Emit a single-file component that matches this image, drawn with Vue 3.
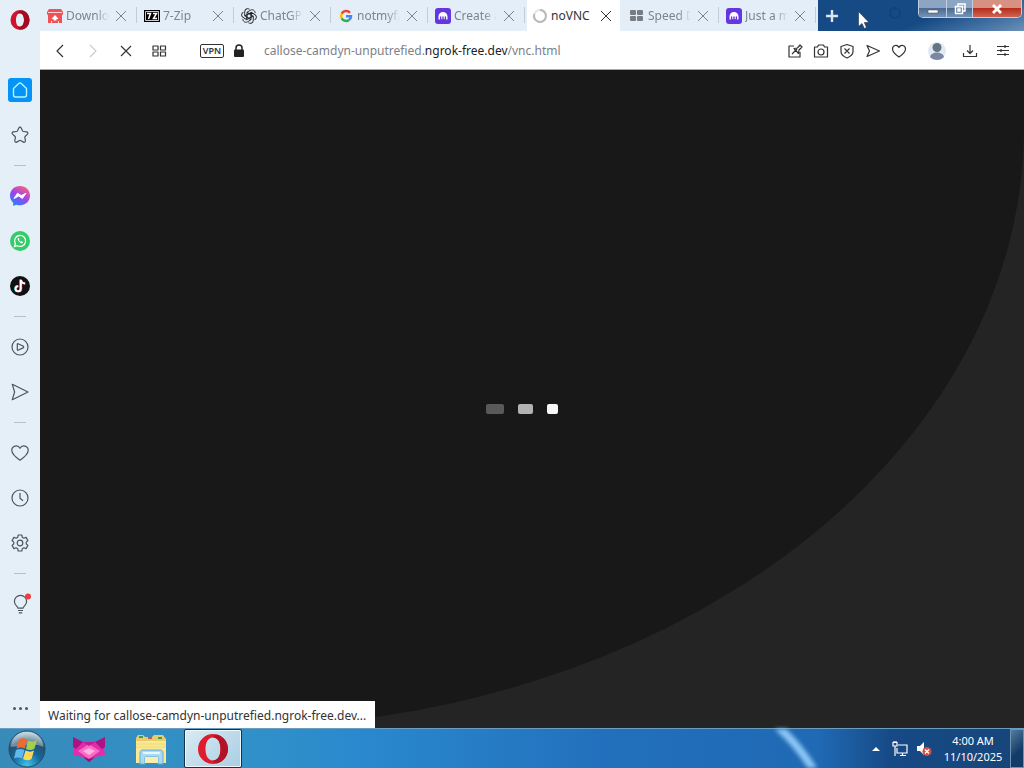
<template>
  <div class="desktop">
    <div class="browser">
      <aside class="sidebar">
        <button class="opera-menu" aria-label="Opera menu">
          <svg width="20" height="20" viewBox="0 0 20 20">
            <path fill="#d3122f" fill-rule="evenodd" d="M10 0a9.500 10 0 1 0 0 20a9.500 10 0 1 0 0-20zM10 3.200c2.500 0 4 2.800 4 6.800s-1.500 6.800-4 6.800s-4-2.800-4-6.800s1.500-6.800 4-6.800z" />
            <path fill="#a30b24" d="M12.500.5C17 1.500 19.500 5.500 19.500 10s-2.500 8.500-7 9.500c-2 .3-4-.6-5.200-3.200C12 18 14 14 14 10s-2-8-6.700-6.300C8.500 1.100 10.500.2 12.500.5z" />
          </svg>
        </button>
        <nav class="side-nav">
          <template v-for="(item, i) in sideItems" :key="i">
            <hr v-if="item === '-'" class="side-line">
            <button v-else class="side-item" :aria-label="item">
              <svg v-if="item === 'home'" width="24" height="24" viewBox="0 0 24 24">
                <rect width="24" height="24" rx="3" fill="#0494f7" />
                <path d="M5.500 10.500L10.700 5.500a2 2 0 0 1 2.600 0l5.200 5v6.500a2 2 0 0 1-2 2h-9a2 2 0 0 1-2-2z" fill="none" stroke="#b8f2ff" stroke-width="1.400" stroke-linejoin="round" />
              </svg>
              <svg v-else-if="item === 'messenger'" width="20" height="20" viewBox="0 0 20 20">
                <defs>
                  <linearGradient id="msn" x1="0.2" y1="1" x2="0.8" y2="0">
                    <stop offset="0" stop-color="#1688ff" />
                    <stop offset="0.5" stop-color="#a044ee" />
                    <stop offset="1" stop-color="#ff6470" />
                  </linearGradient>
                </defs>
                <path d="M10 0C4.300 0 0 4.100 0 9.600c0 3 1.200 5.500 3.200 7.200V20l3-1.300c1.200.4 2.500.6 3.800.6c5.700 0 10-4.100 10-9.700S15.700 0 10 0z" fill="url(#msn)" />
                <path d="M4 12.500l3.500-5.300l3.700 2.400L16 7.200l-3.600 5.200L8.700 10z" fill="#fff" stroke="#fff" stroke-linejoin="round" />
              </svg>
              <svg v-else-if="item === 'whatsapp'" width="20" height="20" viewBox="0 0 20 20">
                <circle cx="10" cy="10" r="10" fill="#31cd66" />
                <path d="M4.500 15.500l.8-2.900a5.500 5.500 0 1 1 2.100 2.100z" fill="none" stroke="#fff" stroke-width="1.300" />
                <path d="M7.800 7.200c-.9 1.600 2.500 5.700 4.800 5l.5-1.200l-1.700-.9l-.7.700c-.8-.3-1.400-1-1.700-1.700l.5-.7l-.6-1.400z" fill="#fff" />
              </svg>
              <svg v-else-if="item === 'tiktok'" width="20" height="20" viewBox="0 0 20 20">
                <circle cx="10" cy="10" r="10" fill="#111" />
                <g fill="none" stroke-width="1.900">
                  <path d="M10.300 3.500v9a2.600 2.600 0 1 1-2.600-2.600M10.300 3.700c.4 2.300 2 3.500 4.200 3.600" stroke="#25e5df" />
                  <path d="M11.300 4v9a2.600 2.600 0 1 1-2.600-2.600M11.300 4.200c.4 2.300 2 3.500 4.200 3.600" stroke="#f32b58" />
                  <path d="M10.800 3.700v9a2.600 2.600 0 1 1-2.600-2.600M10.800 3.900c.4 2.300 2 3.500 4.200 3.600" stroke="#fff" />
                </g>
              </svg>
              <svg v-else class="line-icon" width="20" height="20" viewBox="0 0 20 20">
                <path v-if="item === 'pinboards'" d="M8.800 3a1.300 1.300 0 0 1 2.400 0l1.400 3a1 1 0 0 0 .8.500l3.300.4a1.300 1.300 0 0 1 .8 2.200l-2.400 2.400a1 1 0 0 0-.3.900l.6 3.300a1.300 1.300 0 0 1-1.900 1.400l-2.900-1.600a1 1 0 0 0-1 0l-2.900 1.600a1.300 1.300 0 0 1-1.900-1.400l.6-3.300a1 1 0 0 0-.3-.9L2.500 9.100a1.300 1.300 0 0 1 .8-2.200l3.300-.4a1 1 0 0 0 .8-.5z" />
                <g v-else-if="item === 'player'">
                  <circle cx="10" cy="10" r="8" />
                  <path d="M7.300 7.200c0-.4.300-.6.700-.5l5 2.300c.9.400.9 1.500 0 1.900l-5 2.300c-.4.100-.7-.1-.7-.5z" />
                </g>
                <path v-else-if="item === 'flow'" d="M2.300 2.300L18 10L2.300 17.700L4.600 10z" />
                <path v-else-if="item === 'bookmarks'" d="M10 17.200C4.500 13.500 1.800 10.700 1.800 7.300c0-4.300 5.800-6.300 8.200-2c2.400-4.300 8.200-2.300 8.200 2c0 3.400-2.700 6.200-8.200 9.900z" />
                <g v-else-if="item === 'history'">
                  <circle cx="10" cy="10" r="8" />
                  <path d="M10 5v5.200l3 2.600" />
                </g>
                <g v-else-if="item === 'settings'">
                  <path d="M8.200 2h3.600l.5 2.300l1.500.9l2.300-.8l1.800 3.100l-1.700 1.600v1.800l1.700 1.600l-1.800 3.100l-2.300-.8l-1.500.9l-.5 2.300H8.200l-.5-2.300l-1.500-.9l-2.300.8l-1.800-3.100l1.700-1.600V9.100L2.100 7.500l1.800-3.100l2.300.8l1.500-.9z" />
                  <circle cx="10" cy="10" r="2.800" />
                </g>
                <g v-else-if="item === 'tips'">
                  <path d="M8 14.200c0-1.800-3.600-3-3.600-6.800a6.100 6.100 0 0 1 12.200 0c0 3.800-3.600 5-3.600 6.800zM8 16.500h5M8.800 18.900h3.400" />
                  <circle cx="18" cy="2.500" r="3" class="dot" />
                </g>
              </svg>
            </button>
          </template>
        </nav>
        <button class="more" aria-label="Sidebar setup"><i></i><i></i><i></i></button>
      </aside>

      <div class="main">
        <header class="tab-strip">
          <div class="tabs" role="tablist">
            <div v-for="tab in tabs" :key="tab.title" class="tab" :class="{ active: tab.active }" role="tab">
              <svg v-if="tab.icon === 'itch'" width="16" height="16" viewBox="0 0 16 16">
                <path d="M2 1h12l2 3v2l-1 1.500V15H1V7.500L0 6V4z" fill="#ef5158" />
                <path d="M1 4.500h14M4.500 15v-2M11.500 15v-2" stroke="#fbd5d6" fill="none" />
                <path d="M8 7l3.500 4H9.500v1.500h-3V11h-2z" fill="#fff" />
              </svg>
              <svg v-else-if="tab.icon === '7z'" width="16" height="16" viewBox="0 0 16 16">
                <rect y="2" width="16" height="12" fill="#000" />
                <path d="M1.500 3.500h13v9h-13z" fill="none" stroke="#fff" stroke-width=".8" />
                <path d="M3 5.500h3.500L4.500 11M9 5.500h3.500L9.500 10.500H13" fill="none" stroke="#fff" stroke-width="1.500" />
              </svg>
              <svg v-else-if="tab.icon === 'gpt'" width="16" height="16" viewBox="0 0 16 16" fill="none" stroke="#222" stroke-width=".9">
                <path v-for="n in 6" :key="n" :transform="`rotate(${n * 60} 8 8)`" d="M6 9.200V4.200l3.700-2.100c2-1.100 4.600.4 4.400 3M6 4.200l4.300 2.500" />
              </svg>
              <svg v-else-if="tab.icon === 'google'" width="16" height="16" viewBox="-1 0 16 16" fill="none" stroke-width="2.500">
                <path d="M11 4.700A5 5 0 0 0 2.700 5.600" stroke="#ea4335" />
                <path d="M2.700 5.600a5 5 0 0 0 0 4.800" stroke="#fbbc05" />
                <path d="M2.700 10.400a5 5 0 0 0 7.300 1.500" stroke="#34a853" />
                <path d="M10 11.900c1.400-1 2-2.300 2-3.700H7" stroke="#4285f4" />
              </svg>
              <svg v-else-if="tab.icon === 'kraken'" width="16" height="16" viewBox="0 0 16 16">
                <rect width="16" height="16" rx="3" fill="#6536e0" />
                <path d="M3.500 11V8.500a4.500 4.500 0 0 1 9 0V11a.7.700 0 0 1-1.400 0V9a.7.700 0 0 0-1.400 0v2a.7.700 0 0 1-1 0V9a.7.700 0 0 0-1.400 0v2a.7.700 0 0 1-1 0V9a.7.700 0 0 0-1.400 0v2a.7.700 0 0 1-1.400 0z" fill="#fff" />
              </svg>
              <svg v-else-if="tab.icon === 'loading'" width="16" height="16" viewBox="0 0 16 16" fill="none" stroke-width="2">
                <circle cx="8" cy="8" r="6" stroke="#e4e4e4" />
                <path d="M8 2a6 6 0 1 1-5.700 4" stroke="#b9b9b9" />
              </svg>
              <svg v-else width="16" height="16" viewBox="0 0 16 16" fill="#777d83">
                <rect v-for="n in 4" :key="n" :x="n % 2 ? 1 : 8" :y="n > 2 ? 8 : 2" width="6" height="5" rx="1" />
              </svg>
              <span class="title">{{ tab.title }}</span>
              <button class="close" aria-label="Close tab">
                <svg width="12" height="12" viewBox="0 0 12 12"><path d="M1 1l10 10M11 1L1 11" stroke="currentColor" /></svg>
              </button>
            </div>
          </div>
          <button class="new-tab" aria-label="New tab">
            <svg width="12" height="12" viewBox="0 0 12 12"><path d="M6 0v12M0 6h12" stroke="#dbe6f0" stroke-width="2.400" /></svg>
          </button>
          <svg class="ring" width="14" height="26" viewBox="0 0 14 26"><circle cx="7" cy="13" r="5" fill="none" stroke="#123a66" stroke-width="2" opacity=".5" /></svg>
          <div class="window-buttons">
            <button aria-label="Minimize"><svg width="12" height="12" viewBox="0 0 12 12"><path d="M1 7h10v3H1z" fill="#fff" stroke="#46566a" stroke-width=".6" /></svg></button>
            <button aria-label="Restore"><svg width="12" height="12" viewBox="0 0 12 12" fill="none" stroke="#fff" stroke-width="1.500"><path d="M4 3V1h7v7H9M1.500 3.500h7v7h-7zM4 6h2v2H4z" /></svg></button>
            <button class="quit" aria-label="Close"><svg width="12" height="12" viewBox="0 0 12 12"><path d="M2 2l8 8M10 2l-8 8" stroke="#fff" stroke-width="2.800" /></svg></button>
          </div>
        </header>

        <div class="toolbar">
          <button v-for="(icon, i) in navIcons" :key="i" class="nav-btn" :class="{ disabled: i === 1 }" :aria-label="icon.name">
            <svg class="line-icon" width="16" height="16" viewBox="0 0 16 16"><path :d="icon.d" /></svg>
          </button>
          <button class="vpn">VPN</button>
          <svg width="12" height="14" viewBox="0 0 12 14">
            <path d="M3 6V4a3 3 0 0 1 6 0v2" fill="none" stroke="#222" stroke-width="1.500" />
            <rect x="1" y="5.500" width="10" height="7.500" rx="1" fill="#222" />
          </svg>
          <a class="url" href="#">callose-camdyn-unputrefied.<b>ngrok-free.dev</b>/vnc.html</a>
          <div class="actions">
            <button v-for="icon in actionIcons" :key="icon.name" :aria-label="icon.name">
              <svg class="line-icon" width="16" height="16" viewBox="0 0 16 16"><path :d="icon.d" /></svg>
            </button>
          </div>
          <button class="tool" aria-label="Profile">
            <svg width="18" height="20" viewBox="0 0 18 20">
              <circle cx="9" cy="10" r="9" fill="#deebf4" />
              <circle cx="9" cy="6.500" r="4.500" fill="#66757f" />
              <path d="M2 16c1-6 13-6 14 0c-3 4-11 4-14 0z" fill="#7a88a4" />
            </svg>
          </button>
          <button class="tool" aria-label="Downloads">
            <svg class="line-icon" width="16" height="16" viewBox="0 0 16 16"><path d="M8 2v8M5 7.500L8 10.500L11 7.500M1.500 10v3.500h13V10" /></svg>
          </button>
          <button class="tool" aria-label="Easy setup">
            <svg class="line-icon" width="16" height="16" viewBox="0 0 16 16"><path d="M2 3.500h12M2 7.500h12M2 11.500h12M10 2v3M6 6v3M10 10v3" /></svg>
          </button>
        </div>

        <main class="page">
          <div class="backdrop">
            <div class="loader"><i></i><i></i><i></i></div>
          </div>
          <div class="status">Waiting for callose-camdyn-unputrefied.ngrok-free.dev...</div>
        </main>
      </div>
    </div>

    <footer class="taskbar">
      <svg class="streak" width="70" height="39" viewBox="0 0 70 39"><path d="M13-4C28 9 42 26 53 45" fill="none" stroke="#8cc7f5" stroke-width="8" /></svg>
      <button class="start" aria-label="Start">
        <svg width="38" height="38" viewBox="0 0 38 38">
          <defs>
            <radialGradient id="orb" cx="0.5" cy="0.95" r="0.9">
              <stop offset="0" stop-color="#38c6ee" />
              <stop offset="0.45" stop-color="#17669a" />
              <stop offset="0.75" stop-color="#254f70" />
              <stop offset="1" stop-color="#a6c3d2" />
            </radialGradient>
          </defs>
          <circle cx="19" cy="19" r="18" fill="url(#orb)" stroke="#264b65" />
          <path d="M3 17a16 15 0 0 1 32 0c-9-5-20-1-32 0z" fill="#fff" opacity=".35" />
          <path d="M11 9.500c3-2 5.500-1.500 8 0l-2 9c-3-1.500-5.500-1.500-8.500 0z" fill="#ef6a2c" />
          <path d="M20 10.500c3.500 1.500 6 1.500 9-.5l-2.500 8.500c-3 2-5.500 2-8.500.5z" fill="#a4cf4c" />
          <path d="M8 20c3-1.500 5.500-1.500 8.500 0l-2.500 8.500c-2.500-1.500-5.500-1.500-8 0z" fill="#61b8ee" />
          <path d="M17.500 20.500c3.500 1.500 6 1.500 8.500 0l-2.500 8.500c-3 2-5.500 1.500-8.500 0z" fill="#ffd75a" />
        </svg>
      </button>
      <button class="task" aria-label="Fox">
        <svg width="34" height="28" viewBox="0 0 34 28">
          <path d="M1 2l10 5h12l10-5l-1 11l1 7l-10 2l-6 5l-6-5L1 20l1-7z" fill="#e22cae" />
          <path d="M1 2l10 5l-7 7l-3-2zM33 2L23 7l7 7l3-2z" fill="#a81583" />
          <path d="M17 9l11 7l-11 8L6 16z" fill="#fb6cc5" />
          <path d="M17 13l6 3l-6 4l-6-4z" fill="#ffb3e0" />
          <path d="M11 7h12l-6 4z" fill="#c41c97" />
          <path d="M11 22l6 2l6-2l-6 5z" fill="#8e126f" />
        </svg>
      </button>
      <button class="task" aria-label="Windows Explorer">
        <svg width="34" height="32" viewBox="0 0 34 32">
          <path d="M2 5l2-3h5l2 2h7l2-2h9l3 4v24H2z" fill="#e9cc68" />
          <path d="M5 3h4v2H5zM24 4h4v2h-4z" fill="#3e9a61" />
          <path d="M14 4h4v2h-4z" fill="#cb593f" />
          <path d="M2 8h30v22H2z" fill="#fae995" />
          <path d="M2 11h30M2 14h30" stroke="#efd875" />
          <path d="M6 31V20c0-2 1-3 3-3h17c2 0 3 1 3 3v11h-5v-7H11v7z" fill="#a9daf2" stroke="#65a9cf" />
          <path d="M11 24h13v6H11z" fill="#f8eeb0" />
          <path d="M9 20h17" stroke="#e6f6fd" stroke-width="2" />
        </svg>
      </button>
      <button class="task running" aria-label="Opera">
        <svg width="32" height="32" viewBox="0 0 32 32">
          <path fill="#df1c2b" fill-rule="evenodd" d="M16 1a15 15 0 1 0 0 30a15 15 0 1 0 0-30zM16 4.500c5 0 7.500 5 7.500 11.500S21 27.500 16 27.500S8.500 22.500 8.500 16S11 4.500 16 4.500z" />
          <path fill="#b41225" d="M20 1.800C27 3 31 10 31 16s-4 13-11 14.200c-2 0-3-1-4-2.700c5 0 7.500-5 7.500-11.500S21 4.500 16 4.500c1-1.700 2-2.700 4-2.700z" />
        </svg>
      </button>
      <div class="tray">
        <button aria-label="Show hidden icons"><svg width="10" height="6" viewBox="0 0 10 6"><path d="M5 1l4 4H1z" fill="#fff" /></svg></button>
        <button aria-label="Network">
          <svg width="16" height="16" viewBox="0 0 16 16" fill="none" stroke="#fff" stroke-width="1.200">
            <path d="M6 4h9v8H5V7M8 14.500h6M10.500 12v2.500M1 1.500h4v3.500H1zM3 5v10M2 0v2M4 0v2" />
          </svg>
        </button>
        <button aria-label="Volume muted">
          <svg width="16" height="16" viewBox="0 0 16 16">
            <path d="M1 5h3l4-4v13l-4-4H1z" fill="#fff" />
            <circle cx="11" cy="10.500" r="4.500" fill="#d84b40" />
            <path d="M9 8.500l4 4M13 8.500l-4 4" stroke="#fff" stroke-width="1.500" />
          </svg>
        </button>
      </div>
      <div class="clock"><span>4:00 AM</span><span>11/10/2025</span></div>
      <button class="show-desktop" aria-label="Show desktop"></button>
    </footer>

    <svg class="cursor" width="12" height="18" viewBox="0 0 12 18">
      <path d="M.5.500v15l3.500-3l2.300 5l2.200-1l-2.200-5h4.700z" fill="#fff" stroke="#20334a" stroke-width=".6" />
    </svg>
  </div>
</template>

<script setup>
const tabs = [
  { title: 'Downloa', icon: 'itch' },
  { title: '7-Zip', icon: '7z' },
  { title: 'ChatGPT', icon: 'gpt' },
  { title: 'notmyfa', icon: 'google' },
  { title: 'Create a', icon: 'kraken' },
  { title: 'noVNC', icon: 'loading', active: true },
  { title: 'Speed D', icon: 'dial' },
  { title: 'Just a m', icon: 'kraken' }
]

// '-' is a separator
const sideItems = [
  'home', 'pinboards', '-',
  'messenger', 'whatsapp', 'tiktok', '-',
  'player', 'flow', '-',
  'bookmarks', 'history', 'settings', '-',
  'tips'
]

const navIcons = [
  { name: 'Back', d: 'M11 2L5 8L11 14' },
  { name: 'Forward', d: 'M5 2L11 8L5 14' },
  { name: 'Stop', d: 'M3 3L13 13M13 3L3 13' },
  { name: 'Speed Dial', d: 'M2 3h5v4H2zM9.500 3h5v4h-5zM2 9h5v4H2zM9.500 9h5v4h-5z' }
]

const actionIcons = [
  { name: 'Edit page', d: 'M7 3H2v11h11V9M5 11l5-5M7 5.500l3.500-.5L13 2l2 2l-3 3l-.5 3.500z' },
  { name: 'Snapshot', d: 'M1.500 4h3l1-2h5l1 2h3v10h-13zM11 9a3 3 0 1 1-6 0a3 3 0 0 1 6 0z' },
  { name: 'Ad blocker', d: 'M8 1.500l6 2v5c0 3-2.500 5-6 6.500c-3.500-1.500-6-3.500-6-6.500v-5zM5.500 5.500l5 5M10.500 5.500l-5 5' },
  { name: 'Send to Flow', d: 'M2 2.500L14.500 8L2 13.500L4.500 8z' },
  { name: 'Bookmark', d: 'M8 14C3.500 11 1.500 8.500 1.500 6c0-3.800 4.700-5 6.500-1.500C9.800 1 14.500 2.200 14.500 6c0 2.500-2 5-6.500 8z' }
]
</script>

<style>
body {
  margin: 0;
}
</style>

<style scoped>
.desktop {
  position: relative;
  display: flex;
  flex-direction: column;
  height: 100vh;
  overflow: hidden;
  font: 12px/16px "Noto Sans", "Open Sans", sans-serif;
  color: #333;
}

button {
  display: flex;
  align-items: center;
  justify-content: center;
  flex: none;
  margin: 0;
  padding: 0;
  border: 0;
  background: none;
  font: inherit;
  color: inherit;
}

svg {
  display: block;
  flex: none;
}

.line-icon {
  fill: none;
  stroke: currentColor;
  stroke-width: 1.2;
  stroke-linejoin: round;
  overflow: visible;
}

.browser {
  display: flex;
  flex: 1;
  min-height: 0;
}

/* sidebar */
.sidebar {
  display: flex;
  flex-direction: column;
  width: 40px;
  background: #e4eff8;
}

.opera-menu {
  height: 40px;
}

.side-nav {
  display: flex;
  flex-direction: column;
  padding-top: 27px;
  color: #4b555e;
}

.side-item {
  height: 45px;
}

.side-line {
  width: 12px;
  height: 1px;
  margin: 8px auto 7px;
  border: 0;
  background: #b8c1c9;
}

.dot {
  fill: #f03b3f;
  stroke: none;
}

.more {
  gap: 3px;
  height: 40px;
  margin-top: auto;
}

.more i {
  width: 3px;
  height: 3px;
  border-radius: 50%;
  background: #4b555e;
}

.main {
  display: flex;
  flex-direction: column;
  flex: 1;
  min-width: 0;
}

/* tabs */
.tab-strip {
  display: flex;
  height: 31px;
  background: linear-gradient(160deg, #164a84 88%, #4a78a8 96%, #6d91b5);
}

.tabs {
  display: flex;
  padding-right: 2px;
  background: #e4eef8;
}

.tab {
  display: flex;
  align-items: center;
  gap: 3px;
  box-sizing: border-box;
  width: 97px;
  padding: 0 10px 0 7px;
  background: linear-gradient(#c3ccd5, #c3ccd5) right 7px / 1px 16px no-repeat;
  color: #7c858d;
}

.tab.active {
  padding: 0 8px 0 5px;
  border: solid #e4eef8;
  border-width: 0 2px;
  background: #fff;
  color: #333;
}

.title {
  flex: 1;
  overflow: hidden;
  white-space: nowrap;
  mask-image: linear-gradient(90deg, #000 70%, transparent);
}

.active .title {
  mask-image: none;
}

.close {
  margin-left: 3px;
}

.new-tab {
  width: 28px;
}

.ring {
  margin-left: auto;
}

.window-buttons {
  display: flex;
  height: 18px;
  margin: 0 2px 0 16px;
  box-sizing: border-box;
  border: 1px solid #c0cfdf;
  border-top: 0;
  border-radius: 0 0 5px 5px;
  overflow: hidden;
}

.window-buttons button {
  width: 27px;
  background: linear-gradient(#8ca5c2 45%, #4b6b92 50%, #7793b2);
}

.window-buttons button + button {
  box-sizing: border-box;
  width: 26px;
  border-left: 1px solid #c0cfdf;
}

.window-buttons .quit.quit {
  width: 49px;
  background: linear-gradient(#d89083 45%, #b52f1c 50%, #cf6450);
}

/* address bar */
.toolbar {
  display: flex;
  align-items: center;
  height: 38px;
  padding: 1px 5px 0 3px;
  box-sizing: border-box;
  min-height: 39px;
  border-bottom: 1px solid #aaa;
  background: #fff;
}

.nav-btn {
  width: 33px;
}

.nav-btn.disabled {
  color: #ccc;
}

.vpn {
  box-sizing: border-box;
  width: 24px;
  height: 14px;
  margin: 0 9px 0 25px;
  border: 1px solid #333;
  border-radius: 2px;
  font-size: 9px;
  line-height: 12px;
  font-weight: 600;
}

.url {
  margin-left: 19px;
  color: #7b8187;
  text-decoration: none;
  white-space: nowrap;
}

.url b {
  font-weight: normal;
  color: #222;
}

.actions {
  display: flex;
  margin-left: auto;
  margin-right: 8px;
}

.actions button {
  width: 26px;
}

.tool {
  width: 33px;
}

/* page */
.page {
  position: relative;
  flex: 1;
  min-height: 0;
  background: #242424;
}

.backdrop {
  display: flex;
  align-items: center;
  justify-content: center;
  height: 100%;
  border-bottom-right-radius: 800px 600px;
  background: #181818;
}

.loader {
  display: flex;
  gap: 14px;
  margin-top: 20px;
  margin-right: 20px;
}

.loader i {
  width: 18px;
  height: 10px;
  border-radius: 2px;
  background: #595959;
}

.loader i:nth-child(2) {
  width: 15px;
  background: #b2b2b2;
}

.loader i:nth-child(3) {
  width: 11px;
  background: #f7f7f7;
}

.status {
  position: absolute;
  left: 0;
  bottom: 0;
  padding: 7px 9px 4px 8px;
  background: #fff;
  white-space: nowrap;
}

/* taskbar */
.taskbar {
  position: relative;
  display: flex;
  align-items: center;
  box-sizing: border-box;
  height: 40px;
  border-top: 1px solid #6b9dc2;
  background: linear-gradient(90deg, #388bb9, #3091c9 25%, #2a89ce 35%, #226fbc 60%, #2069b4 80%, #164a86 87%, #164579);
  color: #fff;
}

.streak {
  position: absolute;
  right: 191px;
  top: 0;
  filter: blur(2px);
}

.start {
  width: 54px;
}

.task {
  width: 62px;
  height: 39px;
}

.start + .task {
  margin-left: 4px;
}

.task.running {
  box-sizing: border-box;
  width: 58px;
  margin-left: 2px;
  border: 1px solid #12354c;
  border-radius: 2px;
  background: linear-gradient(135deg, #d9ebf4, #a9cee3);
  box-shadow: inset 0 0 0 1px #eef8fc;
}

.tray {
  display: flex;
  margin-left: auto;
}

.tray button {
  width: 24px;
}

.clock {
  display: flex;
  flex-direction: column;
  align-items: center;
  width: 74px;
  font-size: 11px;
}

.show-desktop {
  width: 14px;
  height: 39px;
  border: 1px solid #6f93b3;
  background: linear-gradient(135deg, #567b9e, #123c68 60%);
}

.cursor {
  position: absolute;
  left: 858px;
  top: 11px;
}
</style>
